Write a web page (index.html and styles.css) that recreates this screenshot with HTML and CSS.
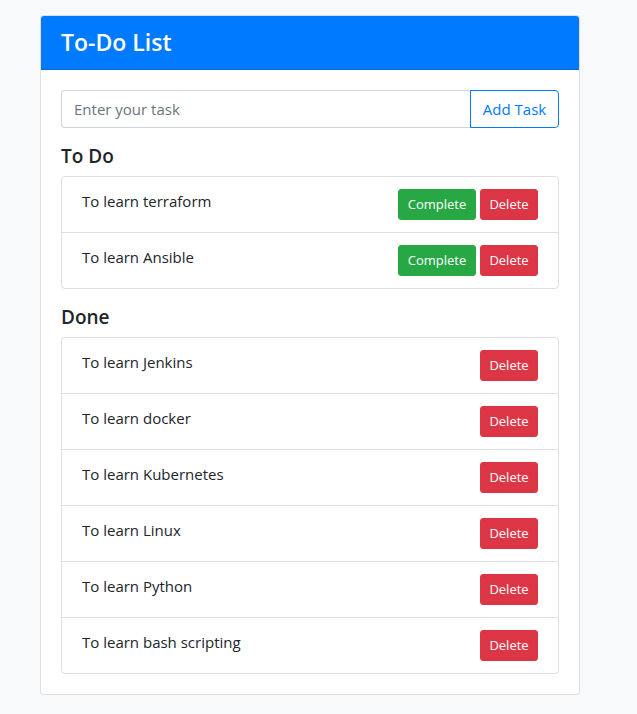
FILE: index.html
```
<!DOCTYPE html>
<html lang="en">
<head>
<meta charset="utf-8">
<title>To-Do List</title>
<link rel="stylesheet" href="styles.css">
</head>
<body>
<div class="card">
  <div class="card-header"><h4 class="title">To-Do List</h4></div>
  <div class="card-body">
    <div class="input-group">
      <input class="form-control" type="text" placeholder="Enter your task">
      <button class="btn btn-outline">Add Task</button>
    </div>
    <h5 class="section">To Do</h5>
    <ul class="list">
      <li class="item"><span>To learn terraform</span><div class="actions"><button class="btn-sm success">Complete</button><button class="btn-sm danger">Delete</button></div></li>
      <li class="item"><span>To learn Ansible</span><div class="actions"><button class="btn-sm success">Complete</button><button class="btn-sm danger">Delete</button></div></li>
    </ul>
    <h5 class="section">Done</h5>
    <ul class="list last">
      <li class="item"><span>To learn Jenkins</span><div class="actions"><button class="btn-sm danger">Delete</button></div></li>
      <li class="item"><span>To learn docker</span><div class="actions"><button class="btn-sm danger">Delete</button></div></li>
      <li class="item"><span>To learn Kubernetes</span><div class="actions"><button class="btn-sm danger">Delete</button></div></li>
      <li class="item"><span>To learn Linux</span><div class="actions"><button class="btn-sm danger">Delete</button></div></li>
      <li class="item"><span>To learn Python</span><div class="actions"><button class="btn-sm danger">Delete</button></div></li>
      <li class="item"><span>To learn bash scripting</span><div class="actions"><button class="btn-sm danger">Delete</button></div></li>
    </ul>
  </div>
</div>
</body>
</html>
```
FILE: styles.css
```
* { box-sizing: border-box; }
body {
  margin: 0;
  padding: 15px 0 0 40px;
  background: #f8f9fa;
  font-family: "Open Sans", "Noto Sans", sans-serif;
  font-size: 15px;
  color: #212529;
}
.card {
  width: 540px;
  background: #fff;
  border: 1px solid rgba(0,0,0,.125);
  border-radius: 4px;
  overflow: hidden;
}
.card-header {
  background: #007bff;
  color: #fff;
  padding: 12px 20px;
  border-bottom: 1px solid rgba(0,0,0,.125);
}
.title {
  margin: 0;
  font-size: 23px;
  font-weight: 600;
  line-height: 29px;
}
.card-body { padding: 20px; }
.input-group { display: flex; margin-bottom: 16px; }
.form-control {
  flex: 1;
  min-width: 0;
  height: 38px;
  padding: 6px 12px;
  font: inherit;
  font-size: 15px;
  color: #495057;
  border: 1px solid #ced4da;
  border-radius: 4px 0 0 4px;
  border-right: 0;
  outline: none;
}
.form-control::placeholder { color: #6c757d; }
.btn-outline {
  flex: none;
  height: 38px;
  width: 89px;
  padding: 0;
  font: inherit;
  font-size: 15px;
  white-space: nowrap;
  text-align: center;
  color: #007bff;
  background: #fff;
  border: 1px solid #007bff;
  border-radius: 0 4px 4px 0;
}
.section {
  margin: 0 0 8px;
  font-size: 19px;
  font-weight: 600;
  line-height: 24px;
}
.list {
  list-style: none;
  margin: 0 0 16px;
  padding: 0;
  border: 1px solid rgba(0,0,0,.125);
  border-radius: 4px;
}
.list.last { margin-bottom: 0; }
.item {
  display: flex;
  justify-content: space-between;
  padding: 12px 20px;
  line-height: 24px;
  height: 56px;
}
.item + .item { border-top: 1px solid rgba(0,0,0,.125); }
.item:first-child { height: 55px; }
.actions { display: flex; gap: 4px; }
.btn-sm {
  height: 31px;
  padding: 0;
  font: inherit;
  font-size: 13px;
  line-height: 29px;
  text-align: center;
  color: #fff;
  border: 1px solid transparent;
  border-radius: 3px;
}
.success { background: #28a745; border-color: #28a745; width: 78px; }
.danger { background: #dc3545; border-color: #dc3545; width: 58px; }
```
